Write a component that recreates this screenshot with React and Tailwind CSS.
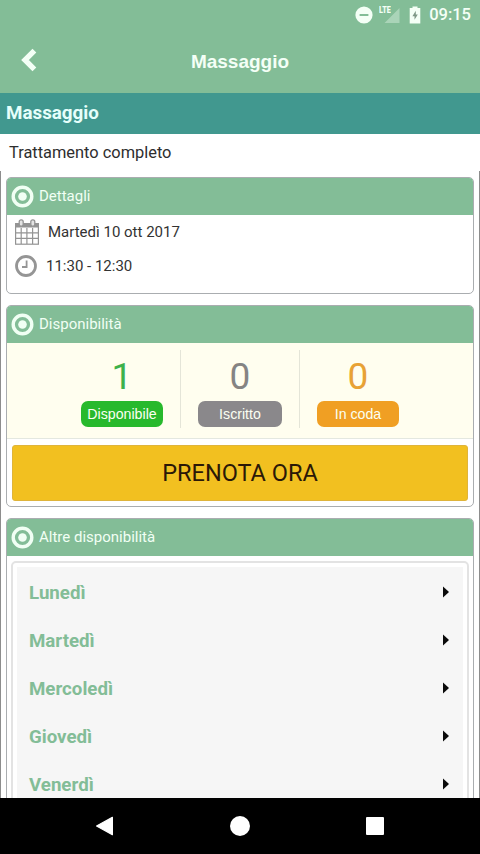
import React from "react";

const DAYS = ["Lunedì", "Martedì", "Mercoledì", "Giovedì", "Venerdì"];

const COUNTERS = [
  {
    id: "available",
    value: 1,
    label: "Disponibile",
    box: "w-[173px] pl-[74px]",
    number: "text-[#3db14b]",
    column: "w-[82px]",
    badge: "bg-[#27b92c]",
  },
  {
    id: "enrolled",
    value: 0,
    label: "Iscritto",
    box: "w-[119px] pl-[17px] border-l border-[#e4e5d8]",
    number: "text-[#858483]",
    column: "w-[84px]",
    badge: "bg-[#8a888b]",
  },
  {
    id: "queue",
    value: 0,
    label: "In coda",
    box: "w-[120px] pl-[17px] border-l border-[#e4e5d8]",
    number: "text-[#e8a235]",
    column: "w-[82px]",
    badge: "bg-[#f09f23]",
  },
];

const StatusBar = () => (
  <div className="flex h-[30px] items-center justify-end pr-[9px] text-[#f4fff6]">
    <svg className="h-[18px] w-[18px]" viewBox="0 0 18 18">
      <circle cx="9" cy="9" r="8.6" fill="currentColor" />
      <rect x="4.6" y="8" width="8.8" height="2" fill="#83bd97" />
    </svg>
    <div className="relative ml-[5px] h-[18px] w-[22px]">
      <span className="absolute left-px top-0 origin-left scale-x-[.8] text-[9px] font-black leading-[9px]">
        LTE
      </span>
      <svg className="absolute bottom-px right-0 h-[15px] w-4" viewBox="0 0 16 16">
        <path d="M16 0V16H0Z" fill="currentColor" opacity="0.35" />
      </svg>
    </div>
    <svg className="ml-[9px] h-[18px] w-[12px]" viewBox="0 0 12 18">
      <path d="M3.5 0.5H8.5V2H11.3V17.5H0.7V2H3.5Z" fill="currentColor" />
      <path d="M6.8 4.8L3.4 10.2H5.5V13.8L8.8 8.6H6.8Z" fill="#7f9887" />
    </svg>
    <span className="ml-[8px] text-[16.5px] font-medium leading-none">09:15</span>
  </div>
);

const Card = ({ title, className, children }) => (
  <section className={`overflow-hidden rounded-[5px] border border-[#aaadb0] bg-white ${className}`}>
    <h2 className="-mx-px -mt-px flex h-[38px] items-center bg-[#83bd97] pl-[5px] text-[15px] text-[#f1fff4]">
      <svg className="mr-[5px] h-[23px] w-[23px]" viewBox="0 0 23 23">
        <circle cx="11.5" cy="11.5" r="9.3" fill="none" stroke="currentColor" strokeWidth="3.4" />
        <circle cx="11.5" cy="11.5" r="4.3" fill="currentColor" />
      </svg>
      <span className="pt-px">{title}</span>
    </h2>
    {children}
  </section>
);

const CalendarIcon = () => (
  <svg className="h-[26px] w-[24px]" viewBox="0 0 24 26" fill="none" stroke="#949494">
    <rect x="0.6" y="4.6" width="22.8" height="20.6" strokeWidth="1.2" />
    <path d="M0 4H24V8.6H0Z" fill="#949494" stroke="none" />
    <path d="M6.2 9V25M11.9 9V25M17.6 9V25M0.6 13.8H23.4M0.6 19.4H23.4" strokeWidth="1.2" />
    <rect x="4.2" y="0.8" width="4" height="6.4" rx="1.9" fill="#e4e4e4" strokeWidth="1.3" />
    <rect x="15.8" y="0.8" width="4" height="6.4" rx="1.9" fill="#e4e4e4" strokeWidth="1.3" />
  </svg>
);

const ClockIcon = () => (
  <svg className="h-[22px] w-[22px]" viewBox="0 0 22 22" fill="none" stroke="#959595">
    <circle cx="11" cy="11" r="9.5" strokeWidth="2.8" />
    <path d="M11.6 5.4V12H7" strokeWidth="1.8" />
  </svg>
);

const Details = () => (
  <Card title="Dettagli" className="h-[117px]">
    <div className="-mt-px text-[15px] text-[#333]">
      <div className="flex h-[35px] items-center pl-2">
        <CalendarIcon />
        <span className="ml-[9px] pt-0.5">Martedì 10 ott 2017</span>
      </div>
      <div className="flex h-[33px] items-center pl-2">
        <ClockIcon />
        <span className="ml-[9px] pt-px">11:30 - 12:30</span>
      </div>
    </div>
  </Card>
);

const Availability = () => (
  <Card title="Disponibilità" className="mt-[11px] h-[202px]">
    <div className="flex h-[96px] border-b border-[#e4e8e0] bg-[#fffeef] pt-[7px]">
      {COUNTERS.map((c) => (
        <div key={c.id} className={`h-[78px] pt-[5px] ${c.box}`}>
          <div className={`flex flex-col ${c.column}`}>
            <span className={`text-center text-[37px] leading-[43px] ${c.number}`}>
              {c.value}
            </span>
            <span
              className={`mt-[3px] flex h-[26px] items-center justify-center rounded-[7px] pt-px font-['Liberation_Sans',Arial,sans-serif] text-[14.2px] text-[#fbfff2] ${c.badge}`}
            >
              {c.label}
            </span>
          </div>
        </div>
      ))}
    </div>
    <div className="px-[5px] pt-[6px]">
      <button className="h-[56px] w-full rounded-[3px] border border-[#dfb43b] bg-[#f2c020] pt-px text-[23.5px] text-[#2b1807]">
        PRENOTA ORA
      </button>
    </div>
  </Card>
);

const OtherDays = () => (
  <Card title="Altre disponibilità" className="mt-[11px] h-[300px]">
    <div className="mx-[4px] mt-[5px] rounded-[5px] border-2 border-[#e3e3e3] bg-white p-1">
      <ul className="bg-[#f6f6f6] pt-px">
        {DAYS.map((day) => (
          <li
            key={day}
            className="flex h-[48px] items-center justify-between pl-3 pr-[14px] text-[18.7px] font-bold text-[#83bd97]"
          >
            <span className="pt-[3px]">{day}</span>
            <svg className="h-[12px] w-[6px]" viewBox="0 0 6 12">
              <path d="M0 0.4L6 6L0 11.6Z" fill="#0a0a0a" />
            </svg>
          </li>
        ))}
      </ul>
    </div>
  </Card>
);

const NavBar = () => (
  <nav className="flex h-[56px] shrink-0 items-center bg-black pl-[95px]">
    <svg className="h-[20px] w-[18px]" viewBox="0 0 18 20">
      <path d="M1.6 10L17.4 1.3V18.7Z" fill="#fff" stroke="#fff" strokeWidth="1.2" strokeLinejoin="round" />
    </svg>
    <div className="ml-[117px] h-[20px] w-[20px] rounded-full bg-white" />
    <div className="ml-[116px] h-[18px] w-[18px] rounded-[1px] bg-white" />
  </nav>
);

export default function App() {
  return (
    <div className="flex h-[854px] w-[480px] flex-col overflow-hidden bg-white font-[Roboto,sans-serif]">
      <header className="h-[93px] shrink-0 bg-[#83bd97]">
        <StatusBar />
        <div className="flex h-[63px] items-center">
          <svg className="mb-1 ml-[20px] h-[24px] w-[18px]" viewBox="0 0 18 24">
            <path d="M14.4 2.6L5 12L14.4 21.4" fill="none" stroke="#f4fff6" strokeWidth="5.4" />
          </svg>
          <h1 className="mr-[38px] flex-1 pt-px text-center font-['Liberation_Sans',Arial,sans-serif] text-[19px] font-bold text-[#f4fff6]">
            Massaggio
          </h1>
        </div>
      </header>
      <div className="flex h-[41px] shrink-0 items-center bg-[#41988f] pl-[6px] text-[18.8px] font-bold text-[#e6fffb]">
        Massaggio
      </div>
      <p className="flex h-[37px] shrink-0 items-center pl-[9px] pt-px text-[16.4px] text-[#2e2e2e]">
        Trattamento completo
      </p>
      <main className="min-h-0 flex-1 overflow-hidden border-x border-[#8d8d8d] px-[5px] pt-[6px]">
        <Details />
        <Availability />
        <OtherDays />
      </main>
      <NavBar />
    </div>
  );
}
